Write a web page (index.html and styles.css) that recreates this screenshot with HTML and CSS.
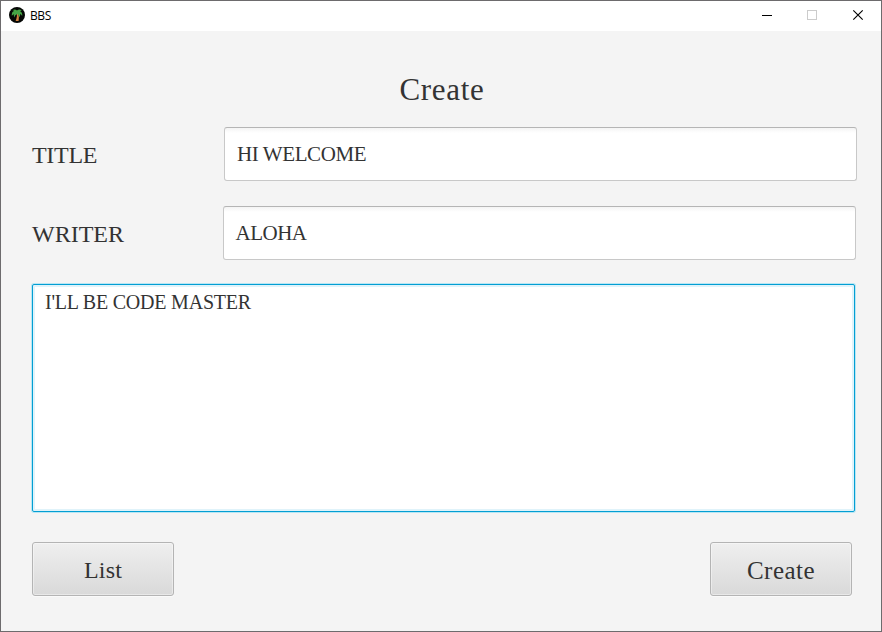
FILE: index.html
```html
<!DOCTYPE html>
<html lang="en">
<head>
<meta charset="utf-8">
<title>BBS</title>
<link rel="stylesheet" href="styles.css">
</head>
<body>
<div class="window">
  <header class="titlebar">
    <svg class="logo" width="16" height="16" viewBox="0 0 16 16">
      <circle cx="8" cy="8" r="8" fill="#050705"/>
      <path d="M7.6 6 Q8.6 9 6.6 14 L9.6 14 Q10.2 9 9.2 6Z" fill="#d08040"/>
      <path d="M8 3.6 Q6 1.4 3.4 3.2 Q5 3.4 5.2 4 Q2.4 4.6 2.8 8.8 Q4 7.4 5.2 7.2 Q4.4 8.6 5.2 10.4 Q6 8 8.2 7 Q10 8 10.4 10.2 Q11.6 8.4 11 7 Q12.4 7.4 13.2 9 Q13.6 5.4 11.2 4.6 Q11.6 3.8 12.8 3.6 Q10.4 1.6 8 3.6Z" fill="#46a545"/>
    </svg>
    <span class="caption">BBS</span>
    <svg class="controls" width="102" height="12" viewBox="0 0 102 12" shape-rendering="crispEdges">
      <path d="M0 6.5H10" stroke="#000"/>
      <rect x="45.5" y="1.5" width="9" height="9" fill="none" stroke="#ccc"/>
      <path d="M91.3 1.3L100.7 10.7M100.7 1.3L91.3 10.7" stroke="#000" stroke-width="1.15" shape-rendering="auto"/>
    </svg>
  </header>
  <main class="form">
    <h1>Create</h1>
    <div class="row row-title">
      <span class="label label-title">TITLE</span>
      <div class="field field-title">HI WELCOME</div>
    </div>
    <div class="row row-writer">
      <span class="label">WRITER</span>
      <div class="field field-writer">ALOHA</div>
    </div>
    <div class="content">I'LL BE CODE MASTER</div>
    <div class="actions">
      <button class="button">List</button>
      <button class="button button-create">Create</button>
    </div>
  </main>
</div>
</body>
</html>
```
FILE: styles.css
```css
* { box-sizing: border-box; }
body { margin: 0; overflow: hidden; }
.window {
  width: 882px;
  height: 632px;
  border: 1px solid #6d6b6d;
  background: #f4f4f4;
  color: #333;
  font-family: "Liberation Serif", serif;
}
.titlebar {
  display: flex;
  align-items: center;
  height: 30px;
  padding: 0 17px 2px 8px;
  background: #fff;
}
.logo { display: block; }
.caption {
  margin-left: 5px;
  color: #000;
  font: 12px/16px "Open Sans", sans-serif;
  letter-spacing: -0.4px;
  padding-top: 1px;
}
.controls { margin-left: auto; }
.form { padding: 38px 24px 0 31px; }
h1 {
  margin: 0;
  padding-right: 5px;
  font-size: 31px;
  font-weight: 400;
  line-height: 42px;
  height: 58px;
  letter-spacing: 0.7px;
  text-align: center;
}
.row { display: flex; height: 54px; }
.row-title { margin-bottom: 25px; }
.row-writer { margin-bottom: 24px; }
.label {
  width: 191px;
  font-size: 24px;
  line-height: 56px;
}
.label-title { width: 192px; letter-spacing: -0.3px; }
.field {
  width: 633px;
  height: 54px;
  padding-left: 12px;
  border: 1px solid #c8c8c8;
  border-top-color: #b5b5b5;
  border-radius: 3px;
  background: linear-gradient(#f4f4f4, #fff 5px);
  font-size: 21px;
  line-height: 53px;
  flex: none;
}
.field-title { letter-spacing: -0.4px; }
.field-writer { padding-left: 11.5px; letter-spacing: -0.5px; }
.content {
  width: 823px;
  height: 228px;
  padding: 3px 12px;
  border: 1px solid #039ed3;
  border-radius: 2px;
  background: #fff;
  box-shadow: 0 0 0 1px #b9e6f3, inset 0 0 0 2px #e0f3fa;
  font-size: 20px;
  line-height: 28px;
  letter-spacing: -0.22px;
}
.actions {
  display: flex;
  justify-content: space-between;
  width: 820px;
  margin-top: 30px;
}
.button {
  width: 142px;
  height: 54px;
  padding: 2px 0 0;
  border: 1px solid #b4b4b4;
  border-radius: 3px;
  background: linear-gradient(#efefef, #d9d9d9);
  box-shadow: inset 0 0 0 1px rgba(255, 255, 255, .4), 0 1px #fafafa;
  color: #333;
  font: 24px "Liberation Serif", serif;
  letter-spacing: 0.2px;
}
.button-create { padding-top: 3px; font-size: 25px; letter-spacing: 0.5px; }
```
